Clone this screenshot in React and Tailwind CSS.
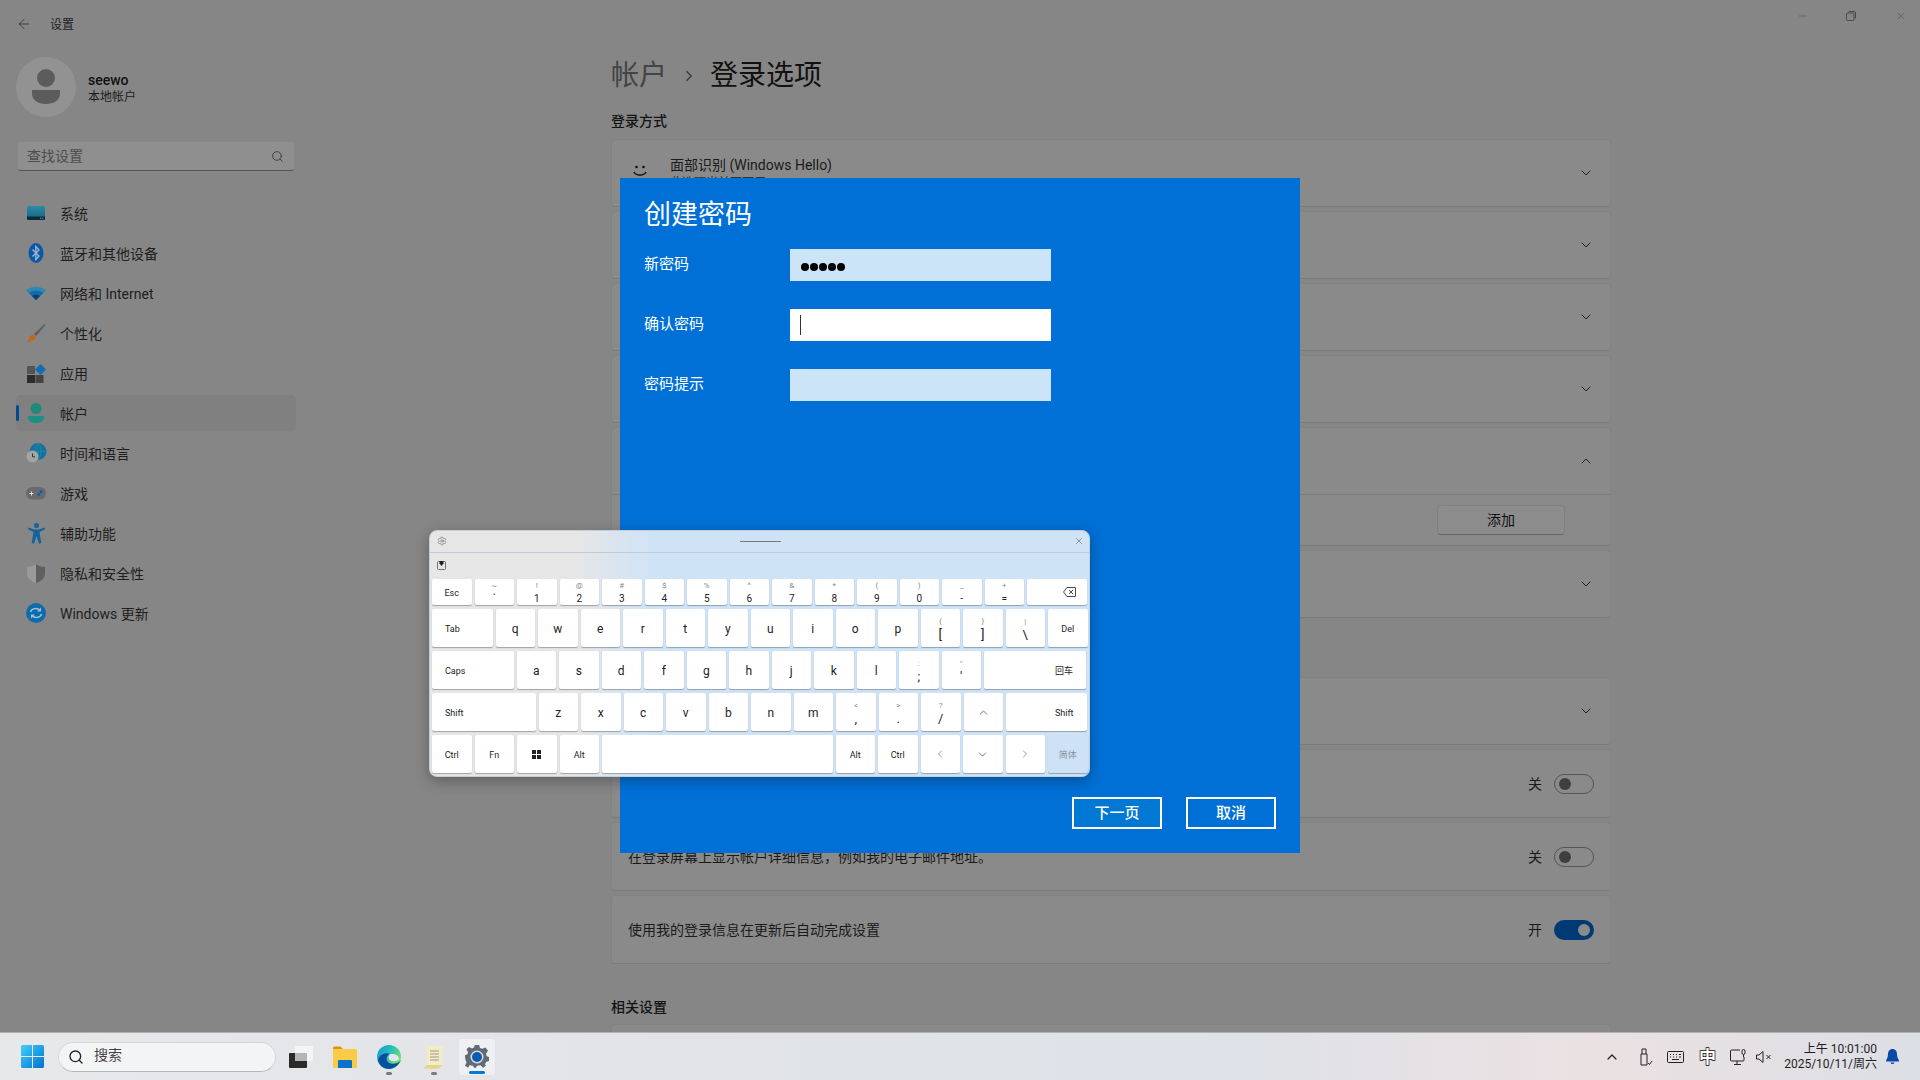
import React from 'react';
import { ArrowLeft, Search, ChevronDown, ChevronUp, ChevronRight, ChevronLeft, X, Minus, Settings } from 'lucide-react';

// 侧边栏图标
const SystemIcon = () => (
    <svg width="20" height="16" viewBox="0 0 20 16">
        <defs><linearGradient id="sysg" x1="0" y1="0" x2="0" y2="1"><stop offset="0" stopColor="#2b8ea6" /><stop offset="1" stopColor="#14607a" /></linearGradient></defs>
        <rect x="1" y="1" width="18" height="14" rx="1.5" fill="url(#sysg)" />
        <path d="M1 11.5h18V13.5a1.5 1.5 0 0 1-1.5 1.5H2.5A1.5 1.5 0 0 1 1 13.5z" fill="#0b2c3a" />
        <rect x="14" y="12.8" width="1.2" height="1" fill="#7a9aa5" /><rect x="16" y="12.8" width="1.2" height="1" fill="#7a9aa5" />
    </svg>
);
const BluetoothIcon = () => (
    <svg width="16" height="20" viewBox="0 0 16 20">
        <ellipse cx="8" cy="10" rx="7.5" ry="10" fill="#0a58a8" />
        <path d="M4.5 6.5 11 13l-3.2 3.5V3.5L11 7l-6.5 6.5" fill="none" stroke="#9fb4c8" strokeWidth="1.4" />
    </svg>
);
const WifiIcon = () => (
    <svg width="20" height="14" viewBox="0 0 20 14">
        <path d="M0 4.5C5-.5 15-.5 20 4.5L10 14z" fill="#2c8ab0" />
        <path d="M3 7c4-3.4 10-3.4 14 0L10 14z" fill="#1668a6" />
        <path d="M6 10c2.500-1.800 5.500-1.800 8 0l-4 4z" fill="#0b3f78" />
    </svg>
);
const BrushIcon = () => (
    <svg width="20" height="20" viewBox="0 0 20 20">
        <path d="M19 .5 8 11l2 2L19.500 2z" fill="#5f5f5f" />
        <path d="M7.500 11.500 10 14c-1 3-4.500 5-9.500 5 2-1.500 2-3 3-5 1-1.500 2.500-2.500 4-2.500z" fill="#bd6a1f" />
    </svg>
);
const AppsIcon = () => (
    <svg width="19" height="19" viewBox="0 0 19 19">
        <rect x="0" y="2" width="8" height="8" fill="#555" />
        <rect x="0" y="11" width="8" height="8" fill="#2b2b2b" />
        <rect x="8.500" y="11" width="8" height="8" fill="#444" />
        <path d="M13.500 0 19 5.500 13.500 11 8 5.500z" fill="#0f6fb0" />
    </svg>
);
const AccountIcon = () => (
    <svg width="18" height="20" viewBox="0 0 18 20">
        <circle cx="9" cy="5.500" r="5.500" fill="#1f8a78" />
        <path d="M1 13h16v2c0 3-3.500 5-8 5s-8-2-8-5z" fill="#1c9080" />
    </svg>
);
const TimeIcon = () => (
    <svg width="21" height="20" viewBox="0 0 21 20">
        <circle cx="12" cy="8.500" r="8.500" fill="#16719e" />
        <path d="M12 0v17M3.500 8.500h17M12 0c-4 4-4 13 0 17M12 0c4 4 4 13 0 17" fill="none" stroke="#1d8c9a" strokeWidth=".8" />
        <circle cx="6.500" cy="13.500" r="6" fill="#a4a4a4" />
        <path d="M6.500 10.500v3.300h2.500" fill="none" stroke="#333" strokeWidth="1" />
    </svg>
);
const GameIcon = () => (
    <svg width="20" height="14" viewBox="0 0 20 14">
        <rect x="0" y="1" width="20" height="12.500" rx="6" fill="#6a6a6e" />
        <path d="M3.500 7.500h4M5.500 5.500v4" stroke="#ddd" strokeWidth="1" />
        <circle cx="15" cy="5.500" r="1.600" fill="#0e5fa8" /><circle cx="13" cy="8.500" r="1.400" fill="#0e5fa8" />
    </svg>
);
const AccessIcon = () => (
    <svg width="17" height="21" viewBox="0 0 17 21" fill="#14639f">
        <circle cx="8.500" cy="2.500" r="2.500" />
        <path d="M.5 4.500 6 6.500h5l5.500-2 .5 1.800L11.500 9l1.800 11-2.300.8L8.500 13 6 20.800 3.700 20 5.500 9 0 6.300z" />
    </svg>
);
const ShieldIcon = () => (
    <svg width="18" height="19" viewBox="0 0 18 19">
        <path d="M9 0c2.500 2 5.500 3 9 3v6c0 5-3.500 8.500-9 10z" fill="#5f5f5f" />
        <path d="M9 0C6.500 2 3.500 3 0 3v6c0 5 3.500 8.500 9 10z" fill="#9a9a9a" />
    </svg>
);
const UpdateIcon = () => (
    <svg width="20" height="20" viewBox="0 0 20 20">
        <circle cx="10" cy="10" r="10" fill="#0d6cab" />
        <path d="M4.500 9C5.500 5.500 11 4 14 7.500M15.500 11C14.500 14.500 9 16 6 12.500" fill="none" stroke="#a5c1d4" strokeWidth="1.400" />
        <path d="M15 4.500v4h-4zM5 15.500v-4h4z" fill="#a5c1d4" />
    </svg>
);

const navItems = [
    { label: '系统', Icon: SystemIcon },
    { label: '蓝牙和其他设备', Icon: BluetoothIcon },
    { label: '网络和 Internet', Icon: WifiIcon },
    { label: '个性化', Icon: BrushIcon },
    { label: '应用', Icon: AppsIcon },
    { label: '帐户', Icon: AccountIcon, active: true },
    { label: '时间和语言', Icon: TimeIcon },
    { label: '游戏', Icon: GameIcon },
    { label: '辅助功能', Icon: AccessIcon },
    { label: '隐私和安全性', Icon: ShieldIcon },
    { label: 'Windows 更新', Icon: UpdateIcon },
];

const Sidebar = () => (
    <div className="w-[611px] shrink-0 pl-[16px] pt-[9px]">
        <div className="flex items-center gap-[12px]">
            <div className="w-[60px] h-[60px] rounded-full bg-[#929292] flex items-center justify-center">
                <svg width="30" height="36" viewBox="0 0 30 36" fill="#5c5c5c">
                    <circle cx="15" cy="9" r="9" />
                    <path d="M1 21h28v4c0 6-6 10-14 10S1 31 1 25z" />
                </svg>
            </div>
            <div className="mt-[2px]">
                <div className="text-[14px] leading-[18px] font-medium text-[#111]">seewo</div>
                <div className="text-[12px] leading-[16px] text-[#1c1c1c]">本地帐户</div>
            </div>
        </div>
        <div className="mt-[24px] ml-px w-[278px] h-[30px] rounded-[4px] bg-[#8f8f8f] border border-[#878787] border-b-[#555] flex items-center justify-between pl-[9px] pr-[10px]">
            <span className="text-[14px] text-[#4d4d4d]">查找设置</span>
            <Search size={13} strokeWidth={1.5} className="text-[#333]" />
        </div>
        <div className="mt-[24px] flex flex-col gap-1 w-[280px]">
            {navItems.map(({ label, Icon, active }) => (
                <div key={label} className={`relative h-[36px] rounded-[5px] flex items-center ${active ? 'bg-[#808080]' : ''}`}>
                    {active && <span className="absolute left-0 top-[10px] w-[3px] h-[16px] rounded-full bg-[#004a8f]" />}
                    <span className="w-[44px] pr-[4px] flex justify-center"><Icon /></span>
                    <span className="mt-[2px] text-[14px] text-[#1e1e1e]">{label}</span>
                </div>
            ))}
        </div>
    </div>
);

const cardClass = 'w-[1000px] rounded-[4px] bg-[#8a8a8a] border border-[#828282] border-b-[#7b7b7b]';

const Toggle = ({ on }) => (
    <div className={`w-[40px] h-[20px] rounded-full flex items-center ${on ? 'bg-[#003a75] justify-end pr-[4px]' : 'border border-[#555] pl-[4px]'}`}>
        <span className={`w-[12px] h-[12px] rounded-full ${on ? 'bg-[#8a8a8a]' : 'bg-[#3f3f3f]'}`} />
    </div>
);

const ChevronCard = ({ children }) => (
    <div className={`${cardClass} h-[68px] flex items-center justify-between pl-[16px] pr-[16px]`}>
        <div className="flex items-center">{children}</div>
        <ChevronDown size={16} strokeWidth={1.5} className="text-[#222]" />
    </div>
);

const ToggleCard = ({ text, on }) => (
    <div className={`${cardClass} h-[69px] flex items-center justify-between pl-[16px] pr-[16px]`}>
        <span className="mt-[2px] text-[14px] text-[#1a1a1a]">{text}</span>
        <div className="flex items-center gap-[12px]">
            <span className="mt-[2px] text-[14px] text-[#1a1a1a]">{on ? '开' : '关'}</span>
            <Toggle on={on} />
        </div>
    </div>
);

const Main = () => (
    <div className="w-[1000px] h-[984px] overflow-hidden">
        <div className="h-[54px] pt-[2px] flex items-center text-[28px] leading-[52px]">
            <span className="text-[#444]">帐户</span>
            <ChevronRight size={18} strokeWidth={1.5} className="ml-[13px] mr-[12px] text-[#333]" />
            <span className="text-[#111]">登录选项</span>
        </div>
        <div className="mt-[9px] mb-[8px] text-[14px] leading-[20px] font-medium text-[#141414]">登录方式</div>
        <div className="flex flex-col gap-1">
            <ChevronCard>
                <svg width="24" height="16" viewBox="0 0 24 16" fill="none" className="-mt-[2px]">
                    <circle cx="8.500" cy="3" r="1.300" fill="#111" /><circle cx="15.500" cy="3" r="1.300" fill="#111" />
                    <path d="M6 8c2 4 10 4 12 0" stroke="#111" strokeWidth="1.500" />
                </svg>
                <div className="ml-[18px]">
                    <div className="text-[14px] leading-[20px] text-[#1a1a1a]">面部识别 (Windows Hello)</div>
                    <div className="text-[12px] leading-[16px] text-[#333]">此选项当前不可用</div>
                </div>
            </ChevronCard>
            <ChevronCard />
            <ChevronCard />
            <ChevronCard />
            <div className={`${cardClass} h-[119px]`}>
                <div className="h-[67px] flex items-center justify-end pr-[16px] border-b border-[#7b7b7b]">
                    <ChevronUp size={16} strokeWidth={1.5} className="text-[#222]" />
                </div>
                <div className="flex justify-end pr-[45px] pt-[10px]">
                    <div className="w-[128px] h-[30px] rounded-[4px] bg-[#8c8c8c] border border-[#808080] border-b-[#666] flex items-center justify-center text-[14px] text-[#111]">添加</div>
                </div>
            </div>
            <ChevronCard />
        </div>
        <div className="h-[59px]" />
        <div className="flex flex-col gap-1">
            <ChevronCard />
            <ToggleCard text="" />
            <ToggleCard text="在登录屏幕上显示帐户详细信息，例如我的电子邮件地址。" />
            <ToggleCard text="使用我的登录信息在更新后自动完成设置" on />
        </div>
        <div className="mt-[33px] mb-[7px] text-[14px] leading-[20px] font-medium text-[#141414]">相关设置</div>
        <div className={`${cardClass} h-[68px]`} />
    </div>
);

const Field = ({ label, active, children }) => (
    <div className="flex items-center h-[32px]">
        <span className="w-[146px] -mt-[1px] text-[15px] text-white">{label}</span>
        <div className={`w-[261px] h-[32px] flex items-center pl-[10px] ${active ? 'bg-white' : 'bg-[#cce4f7]'}`}>{children}</div>
    </div>
);

const Dialog = () => (
    <div className="absolute left-[620px] top-[178px] w-[680px] h-[675px] bg-[#0070d6] flex flex-col pl-[24px] pr-[24px]">
        <div className="mt-[17px] mb-[14px] text-[27px] leading-[40px] text-white">创建密码</div>
        <div className="flex flex-col gap-[28px]">
            <Field label="新密码">
                <div className="flex gap-px mt-[4px] ml-px">
                    {[0, 1, 2, 3, 4].map(i => <span key={i} className="w-[8px] h-[8px] rounded-full bg-black" />)}
                </div>
            </Field>
            <Field label="确认密码" active>
                <span className="w-px h-[20px] bg-[#333]" />
            </Field>
            <Field label="密码提示" />
        </div>
        <div className="mt-auto mb-[24px] flex justify-end gap-[24px]">
            <div className="w-[90px] h-[32px] border-2 border-white bg-[#0078d4] flex items-center justify-center text-[15px] font-medium text-white">下一页</div>
            <div className="w-[90px] h-[32px] border-2 border-white flex items-center justify-center text-[15px] font-medium text-white">取消</div>
        </div>
    </div>
);

// 键盘按键
const Key = ({ main, sub, w = 'w-[39.500px]', align = 'justify-center', size = 'text-[12px]', dim, children }) => (
    <div className={`${w} h-full shrink-0 rounded-[2px] shadow-[0_1px_1px_rgba(0,0,0,0.3)] flex ${align} items-center ${dim ? 'bg-[#cde2f6]' : 'bg-white'}`}>
        {children ? children : sub ? (
            <div className="flex flex-col items-center">
                <span className="text-[8px] leading-[12px] text-[#8a8a8a]">{sub}</span>
                <span className={`${size} leading-[13px] text-[#222]`}>{main}</span>
            </div>
        ) : (
            <span className={`${size} ${size === 'text-[9px]' ? 'mt-[4px]' : 'mt-[2px]'} ${dim ? 'text-[#8a9098]' : 'text-[#222]'}`}>{main}</span>
        )}
    </div>
);

const keyRow1 = [['`', '~'], ['1', '!'], ['2', '@'], ['3', '#'], ['4', '$'], ['5', '%'], ['6', '^'], ['7', '&'], ['8', '*'], ['9', '('], ['0', ')'], ['-', '_'], ['=', '+']];
const keyRow2 = ['q', 'w', 'e', 'r', 't', 'y', 'u', 'i', 'o', 'p'];
const keyRow3 = ['a', 's', 'd', 'f', 'g', 'h', 'j', 'k', 'l'];
const keyRow4 = ['z', 'x', 'c', 'v', 'b', 'n', 'm'];

const Keyboard = () => (
    <div className="absolute left-[429px] top-[530px] w-[661px] h-[247px] rounded-[8px] border border-[#c4ced8] shadow-[0_4px_14px_rgba(0,0,0,0.3)] bg-[linear-gradient(90deg,#e6e6e6_0%,#e6e6e6_22%,#cfe3f7_34%,#cfe3f7_100%)] overflow-hidden">
        <div className="h-[22px] pb-px border-b border-[#c0ccd8] flex items-center justify-between pl-[7px] pr-[5px]">
            <Settings size={10} strokeWidth={1.2} className="text-[#555]" />
            <span className="w-[41px] h-px bg-[#777]" />
            <X size={10} strokeWidth={1.2} className="text-[#444]" />
        </div>
        <div className="h-[26px] pl-[7px] pt-[7px]">
            <svg width="9" height="10" viewBox="0 0 9 10" fill="none">
                <rect x=".5" y="1.500" width="8" height="8" rx="1" stroke="#555" strokeWidth=".8" />
                <path d="M4.500 6 2.500 3.500V1h4v2.500z" fill="#222" />
            </svg>
        </div>
        <div className="pl-[2px] flex flex-col gap-[4px]">
            <div className="flex gap-[3px] h-[26px]">
                <Key main="Esc" size="text-[9px]" />
                {keyRow1.map(([m, s]) => <Key key={m} main={m} sub={s} size="text-[10px]" />)}
                <Key w="w-[59.500px]" align="justify-end pr-[11px]">
                    <svg width="13" height="10" viewBox="0 0 13 10" fill="none" stroke="#333" strokeWidth=".9">
                        <path d="M4 .5h8a.5.5 0 0 1 .5.500v8a.5.5 0 0 1-.5.500H4L.5 5zM6 3l4 4M10 3 6 7" />
                    </svg>
                </Key>
            </div>
            <div className="flex gap-[3px] h-[38px]">
                <Key main="Tab" w="w-[60.500px]" align="justify-start pl-[13px]" size="text-[9px]" />
                {keyRow2.map(k => <Key key={k} main={k} />)}
                <Key main="[" sub="{" size="text-[13px]" />
                <Key main="]" sub="}" size="text-[13px]" />
                <Key main="\" sub="|" size="text-[13px]" />
                <Key main="Del" size="text-[9px]" />
            </div>
            <div className="flex gap-[3px] h-[38px]">
                <Key main="Caps" w="w-[81.500px]" align="justify-start pl-[13px]" size="text-[9px]" />
                {keyRow3.map(k => <Key key={k} main={k} />)}
                <Key main=";" sub=":" size="text-[13px]" />
                <Key main="'" sub={'"'} size="text-[13px]" />
                <Key main="回车" w="w-[102px]" align="justify-end pr-[13px]" size="text-[9px]" />
            </div>
            <div className="flex gap-[3px] h-[38px]">
                <Key main="Shift" w="w-[103.500px]" align="justify-start pl-[13px]" size="text-[9px]" />
                {keyRow4.map(k => <Key key={k} main={k} />)}
                <Key main="," sub="<" size="text-[13px]" />
                <Key main="." sub=">" size="text-[13px]" />
                <Key main="/" sub="?" size="text-[13px]" />
                <Key><ChevronUp size={13} strokeWidth={1.2} className="text-[#333]" /></Key>
                <Key main="Shift" w="w-[80.500px]" align="justify-end pr-[13px]" size="text-[9px]" />
            </div>
            <div className="flex gap-[3px] h-[38px]">
                <Key main="Ctrl" size="text-[9px]" />
                <Key main="Fn" size="text-[9px]" />
                <Key>
                    <svg width="9" height="9" viewBox="0 0 9 9" fill="#222"><rect width="4" height="4" /><rect x="5" width="4" height="4" /><rect y="5" width="4" height="4" /><rect x="5" y="5" width="4" height="4" /></svg>
                </Key>
                <Key main="Alt" size="text-[9px]" />
                <Key w="w-[230.500px]" />
                <Key main="Alt" size="text-[9px]" />
                <Key main="Ctrl" size="text-[9px]" />
                <Key><ChevronLeft size={12} strokeWidth={1.2} className="text-[#555]" /></Key>
                <Key><ChevronDown size={13} strokeWidth={1.2} className="text-[#333]" /></Key>
                <Key><ChevronRight size={12} strokeWidth={1.2} className="text-[#555]" /></Key>
                <Key main="简体" size="text-[9px]" dim />
            </div>
        </div>
    </div>
);

// 任务栏图标
const WinLogo = () => (
    <svg width="23" height="23" viewBox="0 0 23 23">
        <defs><linearGradient id="wing" x1="0" y1="0" x2="1" y2="1"><stop offset="0" stopColor="#45d0f9" /><stop offset="1" stopColor="#0070d0" /></linearGradient></defs>
        <path d="M0 1.500A1.500 1.500 0 0 1 1.500 0H11v11H0zM12 0h9.500A1.500 1.500 0 0 1 23 1.500V11H12zM0 12h11v11H1.500A1.500 1.500 0 0 1 0 21.500zM12 12h11v9.500a1.500 1.500 0 0 1-1.500 1.500H12z" fill="url(#wing)" />
    </svg>
);
const TaskViewIcon = () => (
    <svg width="24" height="22" viewBox="0 0 24 22">
        <rect x="0" y="7" width="18" height="15" rx="1" fill="#2a2a2a" />
        <rect x="6" y="0" width="18" height="15" rx="1" fill="#f6f6f6" fillOpacity=".85" />
        <rect x="6" y="7" width="12" height="8" fill="#b5b5b5" />
    </svg>
);
const FolderIcon = () => (
    <svg width="24" height="22" viewBox="0 0 24 22">
        <path d="M0 2a1.500 1.500 0 0 1 1.500-1.500h6L10 3H0z" fill="#d19a10" />
        <rect x="0" y="3" width="24" height="19" rx="1" fill="#fbcb45" />
        <path d="M5 15a1 1 0 0 1 1-1h12a1 1 0 0 1 1 1v7H5z" fill="#0a72c8" />
    </svg>
);
const EdgeIcon = () => (
    <svg width="24" height="24" viewBox="0 0 24 24">
        <defs><linearGradient id="edgeg" x1="0" y1="0" x2="1" y2=".6"><stop offset="0" stopColor="#1590d8" /><stop offset=".55" stopColor="#28c5b5" /><stop offset="1" stopColor="#7fe06a" /></linearGradient></defs>
        <circle cx="12" cy="12" r="12" fill="url(#edgeg)" />
        <path d="M24 15C21 19 15 20 11.500 17.500 8.500 15 9 10.500 13 9 8 7 2.500 10 1 15c1 5 5 9 11 9 5 0 9.500-3.500 12-9z" fill="#0a4ea0" />
        <path d="M13 9c5-.5 9 1.500 9 5-2 2.500-6 3-8.500 1.500C11 14 11 11 13 9z" fill="#e4e7ec" />
    </svg>
);
const ScrollIcon = () => (
    <svg width="22" height="24" viewBox="0 0 22 24">
        <path d="M4 1h18l-3 3v16l-16 3 1-3z" fill="#f4ecc6" />
        <path d="M4 20h15l-3 3.500H0z" fill="#e6d48a" />
        <path d="M7 6h9M7 9h9M7 12h9M7 15h9" stroke="#9a9a8e" strokeWidth="1" />
    </svg>
);
const GearIcon = () => (
    <svg width="24" height="24" viewBox="0 0 24 24">
        <path d="M10 0h4l1 3.500 2.300 1L20.500 3l2.500 3.500-2 3 .8 2.500 2.200 1v4l-3 1-1 2.500L21 22l-3 2-2.500-2.500-3.500.500-1 2h-2l-1-2-3.500-.500L3 24 0 22l1.500-3.500-1-2.500-.5-3v-2l2.500-1L3 8 1.500 5 4 2.500l3 1.500L9 3z" fill="#626a76" transform="translate(0 -.5) scale(1 .97)" />
        <circle cx="12" cy="12" r="6.500" fill="#d9dde2" />
        <circle cx="12" cy="12" r="5" fill="#0b5cb0" />
    </svg>
);
const Dot = ({ blue }) => (
    <span className={`absolute left-1/2 -translate-x-1/2 bottom-[1px] h-[3px] rounded-full ${blue ? 'w-[16px] bg-[#0078d4]' : 'w-[6px] bg-[#7b7b7b]'}`} />
);

const Taskbar = () => (
    <div className="h-[48px] border-t border-[#b0b0b0] bg-[linear-gradient(90deg,#e6e8ea_0%,#e2e4e8_30%,#dfe2e8_65%,#ebe1e2_83%,#dcdfe5_100%)] flex items-center pl-[21px]">
        <WinLogo />
        <div className="ml-[14px] w-[218px] h-[30px] rounded-full bg-[#f3f4f6] border border-[#d4d6da] border-b-[#b5b7bb] flex items-center pl-[9px]">
            <Search size={16} strokeWidth={2} className="text-[#222]" />
            <span className="ml-[10px] -mt-[2px] text-[14px] text-[#444]">搜索</span>
        </div>
        <div className="ml-[13px]"><TaskViewIcon /></div>
        <div className="ml-[20px]"><FolderIcon /></div>
        <div className="relative ml-[20px] h-[38px] w-[24px] flex items-center"><EdgeIcon /><Dot /></div>
        <div className="relative ml-[22px] h-[38px] w-[22px] flex items-center"><ScrollIcon /><Dot /></div>
        <div className="relative ml-[13px] w-[38px] h-[38px] rounded-[4px] bg-[#eef0f3] border border-[#e2e4e8] flex items-center justify-center"><GearIcon /><Dot blue /></div>
        <div className="ml-auto flex items-center h-full">
            <ChevronUp size={16} strokeWidth={1.8} className="text-[#222]" />
            <svg className="ml-[19px]" width="14" height="18" viewBox="0 0 14 18" fill="none" stroke="#222" strokeWidth="1">
                <path d="M2 6h6v11H2zM3 6V1h4v5M9 15l1.500 1.500L13 13" />
            </svg>
            <svg className="ml-[14px]" width="17" height="12" viewBox="0 0 17 12" fill="none" stroke="#222" strokeWidth="1">
                <rect x=".5" y=".5" width="16" height="11" rx="1" />
                <path d="M3 3.500h1M6 3.500h1M9 3.500h1M12 3.500h2M3 6h1M6 6h1M9 6h1M12 6h2M5 8.500h7" />
            </svg>
            <span className="ml-[15px] text-[17px] leading-[20px] font-bold text-white [-webkit-text-stroke:1.500px_#111] [paint-order:stroke_fill]">中</span>
            <svg className="ml-[14px]" width="17" height="16" viewBox="0 0 17 16" fill="none" stroke="#222" strokeWidth="1">
                <path d="M10 1H1.500A1 1 0 0 0 .5 2v9a1 1 0 0 0 1 1H13a1 1 0 0 0 1-1V8M7 12v3M4 15.500h7" />
                <rect x="12" y=".5" width="3" height="5" rx="1.500" /><path d="M13.500 5.500V8" />
            </svg>
            <svg className="ml-[9px]" width="16" height="12" viewBox="0 0 16 12" fill="none" stroke="#222" strokeWidth="1">
                <path d="M.5 4v4h2.500L7 11.500V.500L3 4zM10.500 4l4 4M14.500 4l-4 4" />
            </svg>
            <div className="ml-[7px] w-[98px] text-right text-[12px] leading-[15px] text-[#1e1e1e]">
                <div>上午 10:01:00</div>
                <div>2025/10/11/周六</div>
            </div>
            <svg className="ml-[9px] mr-[21px]" width="13" height="15" viewBox="0 0 13 15" fill="#0a4aa6">
                <path d="M6.500 0C3.500 0 2 2.500 2 5c0 3-1 5-2 6.500v1h13v-1C12 10 11 8 11 5c0-2.500-1.500-5-4.500-5zM4.500 13.500h4c-.5 1-1 1.500-2 1.500s-1.500-.5-2-1.500z" />
            </svg>
        </div>
    </div>
);

const App = () => (
    <div className="relative w-[1920px] h-[1080px] overflow-hidden bg-[#868686] font-['Roboto','Noto_Sans_CJK_SC',sans-serif]">
        <div className="h-[48px] flex items-center justify-between">
            <div className="flex items-center">
                <ArrowLeft size={16} strokeWidth={1.3} className="ml-[16px] text-[#333]" />
                <span className="ml-[18px] mt-[1px] text-[12px] text-[#222]">设置</span>
            </div>
            <div className="flex items-center pr-[13px] -mt-[17px] gap-[37px] text-[#444]">
                <Minus size={12} strokeWidth={1} />
                <svg width="10" height="10" viewBox="0 0 10 10" fill="none" stroke="#444" strokeWidth=".9">
                    <rect x=".5" y="2" width="7.500" height="7.500" rx="1" /><path d="M2.500 .5H8A1.500 1.500 0 0 1 9.500 2v5.500" />
                </svg>
                <X size={12} strokeWidth={1} className="ml-[2px]" />
            </div>
        </div>
        <div className="h-[984px] flex">
            <Sidebar />
            <Main />
        </div>
        <Taskbar />
        <Dialog />
        <Keyboard />
    </div>
);

export default App;
